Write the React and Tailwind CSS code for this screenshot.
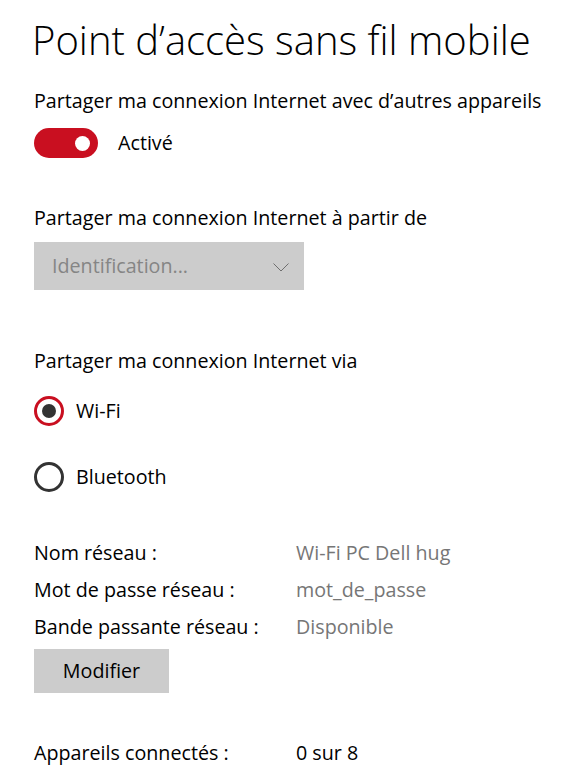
function Radio({ checked, label }) {
  return (
    <div className="flex items-center gap-3 h-[30px]">
      <span
        className={
          checked
            ? "flex h-[30px] w-[30px] items-center justify-center rounded-full border-[3px] border-[#c90f20]"
            : "flex h-[30px] w-[30px] items-center justify-center rounded-full border-[3px] border-[#333333]"
        }
      >
        {checked && <span className="h-[14px] w-[14px] rounded-full bg-[#333333]" />}
      </span>
      <span className="text-black">{label}</span>
    </div>
  );
}

function InfoRow({ label, value, dim = true }) {
  return (
    <div className="flex h-[37px] items-center">
      <span className="w-[262px] text-black">{label}</span>
      <span className={dim ? "text-[#767676]" : "text-black"}>{value}</span>
    </div>
  );
}

export default function App() {
  return (
    <div
      className="h-[781px] w-[577px] overflow-hidden bg-white pl-[34px] text-[19.7px] text-black"
      style={{ fontFamily: '"Open Sans", "Noto Sans", sans-serif' }}
    >
      <h1 className="-ml-[2px] pt-[12px] text-[40px] font-light leading-[56px]">
        Point d’accès sans fil mobile
      </h1>

      <p className="mt-[19px] leading-[28px]">Partager ma connexion Internet avec d’autres appareils</p>
      <div className="mt-[13px] flex items-center gap-[20px]">
        <span className="flex h-[30px] w-[64px] items-center justify-end rounded-full bg-[#c90f20] pr-[8px]">
          <span className="h-[15px] w-[15px] rounded-full bg-white" />
        </span>
        <span>Activé</span>
      </div>

      <p className="mt-[46px] leading-[28px]">Partager ma connexion Internet à partir de</p>
      <div className="mt-[10px] flex h-[48px] w-[270px] items-center justify-between bg-[#cccccc] pl-[18px] pr-[15px] text-[#858585]">
        <span>Identification...</span>
        <svg width="16" height="9" viewBox="0 0 16 9" fill="none" className="mt-[2px]">
          <polyline points="0.5,0.5 8,8 15.5,0.5" stroke="#6e6e6e" strokeWidth="1" />
        </svg>
      </div>

      <p className="mt-[57px] leading-[28px]">Partager ma connexion Internet via</p>
      <div className="mt-[21px] flex flex-col gap-[36px]">
        <Radio checked label="Wi-Fi" />
        <Radio label="Bluetooth" />
      </div>

      <div className="mt-[42px] flex flex-col">
        <InfoRow label="Nom réseau :" value="Wi-Fi PC Dell hug" />
        <InfoRow label="Mot de passe réseau :" value="mot_de_passe" />
        <InfoRow label="Bande passante réseau :" value="Disponible" />
      </div>
      <button className="mt-[4px] flex h-[44px] w-[135px] items-center justify-center bg-[#cccccc] text-black">
        Modifier
      </button>

      <div className="mt-[41px]">
        <InfoRow label="Appareils connectés :" value="0 sur 8" dim={false} />
      </div>
    </div>
  );
}
